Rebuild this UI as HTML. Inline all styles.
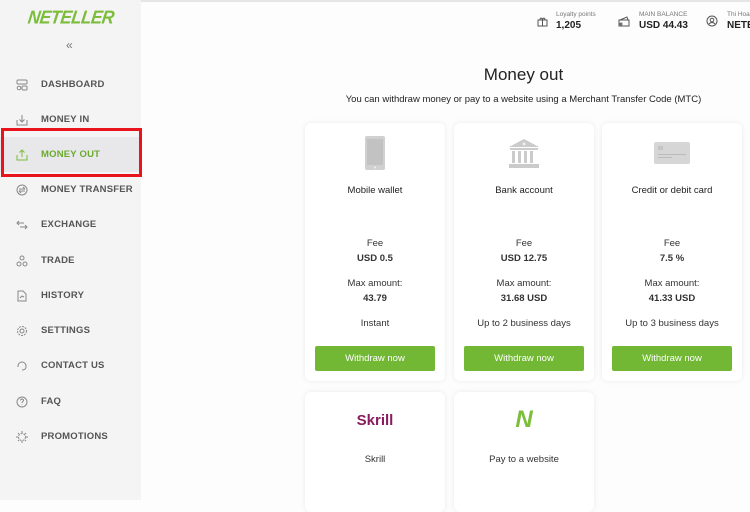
<!DOCTYPE html>
<html><head><meta charset="utf-8"><style>
*{box-sizing:border-box;margin:0;padding:0}
body{width:750px;height:500px;overflow:hidden;font-family:"Liberation Sans",sans-serif;background:#fdfdfd;position:relative;color:#222}
.side{position:absolute;left:0;top:0;width:141px;height:500px;background:#f4f4f5}
.logo{position:absolute;left:28px;top:8px;font:italic 900 17px "Liberation Sans",sans-serif;color:#7cbd3b;letter-spacing:-0.5px;transform:skewX(-8deg) scaleY(1.1)}
.chev{position:absolute;left:66px;top:38px;color:#777;font-size:12px}
.nav{position:absolute;left:0;width:141px;height:35px;display:flex;align-items:center;font-size:9.5px;font-weight:bold;color:#555;letter-spacing:.2px}
.nav svg{position:absolute;left:16px}
.nav span{position:absolute;left:41px}
.active{background:#e8e8ea;color:#6aaa2e}
.redbox{position:absolute;left:1px;top:128px;width:141px;height:49px;border:3px solid #e8141c}
.top{position:absolute;top:0;left:141px;right:0;height:2px;background:#e6e6e6}
.hd{position:absolute;top:11px;font-size:6.5px;color:#777}
.hd b{display:block;font-size:10px;color:#222;margin-top:2px}
h1{position:absolute;left:305px;width:437px;top:65px;text-align:center;font-weight:normal;font-size:17px;color:#222}
.sub{position:absolute;left:300px;width:447px;top:94px;text-align:center;font-size:9.5px;color:#222}
.card{position:absolute;width:140px;background:#fff;border-radius:6px;box-shadow:0 0 6px rgba(0,0,0,.08);text-align:center;font-size:9.5px}
.card .t{position:absolute;left:0;right:0;top:62px;font-size:9.5px}
.l{position:absolute;left:0;right:0;font-size:9.5px;color:#333}
.btn{position:absolute;left:10px;width:120px;height:25px;top:223px;background:#72b835;border-radius:2px;color:#fff;font-size:9.5px;line-height:25px}
</style></head><body>
<div class="side">
<div class="logo">NETELLER</div>
<div class="chev">«</div>
<div class="nav" style="top:67px"><svg width="12" height="12" viewBox="0 0 12 12" fill="none" stroke="#888"><rect x="1" y="1" width="10" height="4" rx="1"/><circle cx="3" cy="9" r="1.8"/><rect x="6" y="7" width="5" height="4" rx="1"/></svg><span>DASHBOARD</span></div>
<div class="nav" style="top:102px"><svg width="12" height="12" viewBox="0 0 12 12" fill="none" stroke="#888"><path d="M1 6v5h10V6M6 1v7M3.5 5.5L6 8l2.5-2.5"/></svg><span>MONEY IN</span></div>
<div class="nav active" style="top:137px"><svg width="12" height="12" viewBox="0 0 12 12" fill="none" stroke="#7cbd3b"><path d="M1 6v5h10V6M6 8V1M3.5 3.5L6 1l2.5 2.5"/></svg><span>MONEY OUT</span></div>
<div class="nav" style="top:172px"><svg width="12" height="12" viewBox="0 0 12 12" fill="none" stroke="#888"><circle cx="6" cy="6" r="5"/><path d="M3 5h6M7 3l2 2M9 7H3M5 9L3 7"/></svg><span>MONEY TRANSFER</span></div>
<div class="nav" style="top:207px"><svg width="12" height="12" viewBox="0 0 12 12" fill="none" stroke="#888"><path d="M1 4h7M3 2L1 4l2 2M11 8H4M9 6l2 2-2 2"/></svg><span>EXCHANGE</span></div>
<div class="nav" style="top:243px"><svg width="12" height="12" viewBox="0 0 12 12" fill="none" stroke="#888"><circle cx="6" cy="3" r="2"/><circle cx="3" cy="9" r="2"/><circle cx="9" cy="9" r="2"/></svg><span>TRADE</span></div>
<div class="nav" style="top:278px"><svg width="12" height="12" viewBox="0 0 12 12" fill="none" stroke="#888"><path d="M2 1h5l3 3v7H2z"/><path d="M4 8l2-2 2 1"/></svg><span>HISTORY</span></div>
<div class="nav" style="top:313px"><svg width="12" height="12" viewBox="0 0 12 12" fill="none" stroke="#888"><circle cx="6" cy="6" r="4.5" stroke-dasharray="2 1"/><circle cx="6" cy="6" r="2"/></svg><span>SETTINGS</span></div>
<div class="nav" style="top:348px"><svg width="12" height="12" viewBox="0 0 12 12" fill="none" stroke="#888"><path d="M2 7V6a4 4 0 018 0v1M10 7c0 2-2 3-4 3"/></svg><span>CONTACT US</span></div>
<div class="nav" style="top:384px"><svg width="12" height="12" viewBox="0 0 12 12" fill="none" stroke="#888"><circle cx="6" cy="6" r="5"/><path d="M4.5 4.5a1.5 1.5 0 113 0c0 1-1.5 1-1.5 2.5M6 8.5v.5"/></svg><span>FAQ</span></div>
<div class="nav" style="top:419px"><svg width="12" height="12" viewBox="0 0 12 12" fill="none" stroke="#888"><circle cx="6" cy="6" r="3.5" stroke-dasharray="2 1"/><path d="M6 0v2M6 10v2M0 6h2M10 6h2M2 2l1 1M9 9l1 1M10 2L9 3M2 10l1-1"/></svg><span>PROMOTIONS</span></div>
</div>
<div class="redbox"></div>
<div class="top"></div>
<svg style="position:absolute;left:537px;top:16px" width="11" height="11" viewBox="0 0 11 11" fill="none" stroke="#555"><rect x="1" y="4" width="9" height="6"/><path d="M1 4h9M5.5 4v6M3 4c0-3 2.5-2 2.5 0C5.5 2 8 1 8 4"/></svg>
<div class="hd" style="left:556px">Loyalty points<b>1,205</b></div>
<svg style="position:absolute;left:618px;top:16px" width="13" height="11" viewBox="0 0 13 11" fill="none" stroke="#555"><path d="M1 4h10v6H1zM2 4l7-3 1 3"/><circle cx="3" cy="8" r="1"/></svg>
<div class="hd" style="left:639px">MAIN BALANCE<b>USD 44.43</b></div>
<svg style="position:absolute;left:706px;top:15px" width="12" height="12" viewBox="0 0 12 12" fill="none" stroke="#555"><circle cx="6" cy="6" r="5"/><circle cx="6" cy="5" r="1.8"/><path d="M3 9c1.5-2 4.5-2 6 0"/></svg>
<div class="hd" style="left:727px">Thi Hoa<b>NETE</b></div>
<h1>Money out</h1>
<div class="sub">You can withdraw money or pay to a website using a Merchant Transfer Code (MTC)</div>

<div class="card" style="left:305px;top:123px;height:258px">
<svg style="position:absolute;left:60px;top:13px" width="20" height="34" viewBox="0 0 20 34"><rect x="0" y="0" width="20" height="34" rx="2" fill="#d0d0d0"/><rect x="2" y="3" width="16" height="26" fill="#c2c2c2"/><circle cx="10" cy="31.5" r="1" fill="#eee"/></svg>
<div class="t">Mobile wallet</div>
<div class="l" style="top:115px">Fee</div><div class="l" style="top:130px;font-weight:bold">USD 0.5</div>
<div class="l" style="top:155px">Max amount:</div><div class="l" style="top:170px;font-weight:bold">43.79</div>
<div class="l" style="top:195px">Instant</div>
<div class="btn">Withdraw now</div></div>

<div class="card" style="left:454px;top:123px;height:258px">
<svg style="position:absolute;left:55px;top:16px" width="30" height="29" viewBox="0 0 30 29" fill="#cbcbcb"><path d="M15 0L0 8h30z"/><rect x="1" y="9" width="28" height="2"/><rect x="3" y="12" width="3" height="12"/><rect x="9" y="12" width="3" height="12"/><rect x="15" y="12" width="3" height="12"/><rect x="21" y="12" width="3" height="12"/><rect x="0" y="25" width="30" height="4"/><circle cx="15" cy="5" r="1.5" fill="#eee"/></svg>
<div class="t">Bank account</div>
<div class="l" style="top:115px">Fee</div><div class="l" style="top:130px;font-weight:bold">USD 12.75</div>
<div class="l" style="top:155px">Max amount:</div><div class="l" style="top:170px;font-weight:bold">31.68 USD</div>
<div class="l" style="top:195px">Up to 2 business days</div>
<div class="btn">Withdraw now</div></div>

<div class="card" style="left:602px;top:123px;height:258px">
<svg style="position:absolute;left:52px;top:19px" width="36" height="22" viewBox="0 0 36 22"><rect width="36" height="22" rx="2" fill="#d6d6d6"/><rect x="4" y="4" width="5" height="4" fill="#c4c4c4"/><rect x="4" y="12" width="28" height="1" fill="#bbb"/><rect x="4" y="15" width="14" height="1" fill="#bbb"/></svg>
<div class="t">Credit or debit card</div>
<div class="l" style="top:115px">Fee</div><div class="l" style="top:130px;font-weight:bold">7.5 %</div>
<div class="l" style="top:155px">Max amount:</div><div class="l" style="top:170px;font-weight:bold">41.33 USD</div>
<div class="l" style="top:195px">Up to 3 business days</div>
<div class="btn">Withdraw now</div></div>

<div class="card" style="left:305px;top:392px;height:120px">
<div style="position:absolute;left:0;right:0;top:20px;font-size:15px;font-weight:900;color:#8a1c5e">Skrill</div>
<div class="l" style="top:62px">Skrill</div></div>
<div class="card" style="left:454px;top:392px;height:120px">
<div style="position:absolute;left:0;right:0;top:14px;font-size:24px;font-weight:900;font-style:italic;color:#7cbd3b">N</div>
<div class="l" style="top:62px">Pay to a website</div></div>
</body></html>
